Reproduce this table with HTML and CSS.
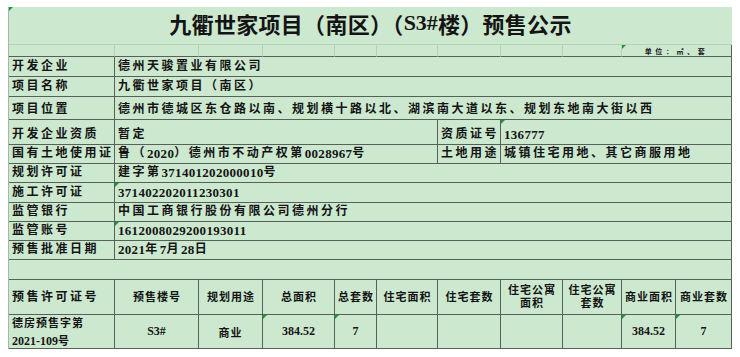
FILE: index.html
```html
<!DOCTYPE html>
<html lang="zh-CN">
<head>
<meta charset="utf-8">
<title>九衢世家项目（南区）（S3#楼）预售公示</title>
<link rel="stylesheet" href="styles.css">
</head>
<body>
<div class="sheet">
  <div class="title"><span class="mark"></span>九衢世家项目（南区）（<span class="tnum">S3#</span>楼）预售公示</div>

  <div class="unit"></div><div class="unit"></div><div class="unit"></div>
  <div class="unit"></div><div class="unit"></div><div class="unit"></div>
  <div class="unit"></div><div class="unit"></div><div class="unit"></div>
  <div class="unit unit-note"><span class="mark"></span>单位：㎡、套</div>

  <div class="cell lbl">开发企业</div>
  <div class="cell val span10">德州天骏置业有限公司</div>

  <div class="cell lbl">项目名称</div>
  <div class="cell val span10">九衢世家项目（南区）</div>

  <div class="cell lbl">项目位置</div>
  <div class="cell val span10">德州市德城区东仓路以南、规划横十路以北、湖滨南大道以东、规划东地南大街以西</div>

  <div class="cell lbl">开发企业资质</div>
  <div class="cell val span5">暂定</div>
  <div class="cell lbl">资质证号</div>
  <div class="cell val span4"><span class="mark"></span><span class="num">136777</span></div>

  <div class="cell lbl">国有土地使用证</div>
  <div class="cell val span5">鲁（<span class="num">2020</span>）德州市不动产权第<span class="num">0028967</span>号</div>
  <div class="cell lbl">土地用途</div>
  <div class="cell val span4">城镇住宅用地、其它商服用地</div>

  <div class="cell lbl">规划许可证</div>
  <div class="cell val span10">建字第<span class="num">371401202000010</span>号</div>

  <div class="cell lbl">施工许可证</div>
  <div class="cell val span10"><span class="mark"></span><span class="num">371402202011230301</span></div>

  <div class="cell lbl">监管银行</div>
  <div class="cell val span10">中国工商银行股份有限公司德州分行</div>

  <div class="cell lbl">监管账号</div>
  <div class="cell val span10"><span class="mark"></span><span class="num">1612008029200193011</span></div>

  <div class="cell lbl">预售批准日期</div>
  <div class="cell val span10"><span class="num">2021</span>年<span class="num">7</span>月<span class="num">28</span>日</div>

  <div class="cell blank"></div>

  <div class="cell th th-first">预售许可证号</div>
  <div class="cell th">预售楼号</div>
  <div class="cell th">规划用途</div>
  <div class="cell th">总面积</div>
  <div class="cell th">总套数</div>
  <div class="cell th">住宅面积</div>
  <div class="cell th">住宅套数</div>
  <div class="cell th"><span class="txt">住宅公寓<br>面积</span></div>
  <div class="cell th"><span class="txt">住宅公寓<br>套数</span></div>
  <div class="cell th">商业面积</div>
  <div class="cell th">商业套数</div>

  <div class="cell td td-first"><span class="txt">德房预售字第<br><span class="dnum">2021-109</span>号</span></div>
  <div class="cell td"><span class="dnum">S3#</span></div>
  <div class="cell td">商业</div>
  <div class="cell td"><span class="mark"></span><span class="dnum">384.52</span></div>
  <div class="cell td"><span class="mark"></span><span class="dnum">7</span></div>
  <div class="cell td"></div>
  <div class="cell td"></div>
  <div class="cell td"></div>
  <div class="cell td"></div>
  <div class="cell td"><span class="mark"></span><span class="dnum">384.52</span></div>
  <div class="cell td"><span class="mark"></span><span class="dnum">7</span></div>
</div>
</body>
</html>
```

FILE: styles.css
```css
* { box-sizing: border-box; }

html, body { background: #ffffff; }

body {
  margin: 7px 8px 0 8px;
  font-family: "Liberation Serif", "Noto Sans CJK SC", serif;
  color: #141414;
}

.sheet {
  width: 724px;
  display: grid;
  grid-template-columns: 106px 84px 64px 72px 42px 61px 63px 62px 59px 54px 56px;
  grid-template-rows: 38px 12px 20px 20px 23px 25px 19px 19px 20px 19px 19px 19px 20px 35px 34px;
  background: #cce8cf;
  border-left: 1px solid #a3b8a6;
}

.mark {
  position: absolute;
  top: 0;
  left: 0;
  width: 0;
  height: 0;
  border-top: 4px solid #169c36;
  border-right: 4px solid transparent;
}

.title {
  position: relative;
  grid-column: span 11;
  display: flex;
  justify-content: center;
  align-items: center;
  padding-bottom: 6px;
  font-family: "Liberation Serif", "Noto Sans CJK SC", serif;
  font-weight: 700;
  font-size: 22px;
  letter-spacing: 0.3px;
  border-bottom: 1px solid #b7d0ba;
}

.tnum { letter-spacing: 0; }

.unit {
  position: relative;
  border-right: 1px solid #b7d0ba;
  border-bottom: 1px solid #58605a;
}

.unit-note {
  grid-column: span 2;
  border-right: 1px solid #58605a;
  display: flex;
  justify-content: center;
  align-items: flex-end;
  font-family: "Noto Sans CJK SC", sans-serif;
  font-weight: 700;
  font-size: 7px;
  line-height: 8px;
  letter-spacing: 3.6px;
  padding-bottom: 1px;
}

.cell {
  position: relative;
  border-right: 1px solid #58605a;
  border-bottom: 1px solid #58605a;
  display: flex;
  min-width: 0;
  white-space: nowrap;
}

.txt { display: block; }

.lbl, .val {
  align-items: flex-end;
  padding: 0 0 2px 3px;
  font-size: 12px;
  line-height: 15px;
  font-weight: 700;
  letter-spacing: 2.5px;
}

.num {
  font-family: "Liberation Serif", serif;
  font-weight: 700;
  font-size: 13px;
  letter-spacing: 0.3px;
}

.span10 { grid-column: span 10; }
.span5 { grid-column: span 5; }
.span4 { grid-column: span 4; }

.blank { grid-column: span 11; }

.th {
  justify-content: center;
  align-items: center;
  text-align: center;
  font-size: 11px;
  line-height: 13px;
  font-weight: 700;
  letter-spacing: 1px;
  padding-left: 1px;
}

.th-first {
  justify-content: flex-start;
  font-size: 12px;
  letter-spacing: 2.5px;
  padding-left: 3px;
}

.td {
  justify-content: center;
  align-items: center;
  text-align: center;
  font-size: 11px;
  font-weight: 700;
  letter-spacing: 1px;
}

.td-first {
  justify-content: flex-start;
  text-align: left;
  line-height: 18px;
  padding-left: 3px;
}

.dnum {
  font-family: "Liberation Serif", serif;
  font-weight: 700;
  font-size: 12px;
  letter-spacing: 0;
}
```
